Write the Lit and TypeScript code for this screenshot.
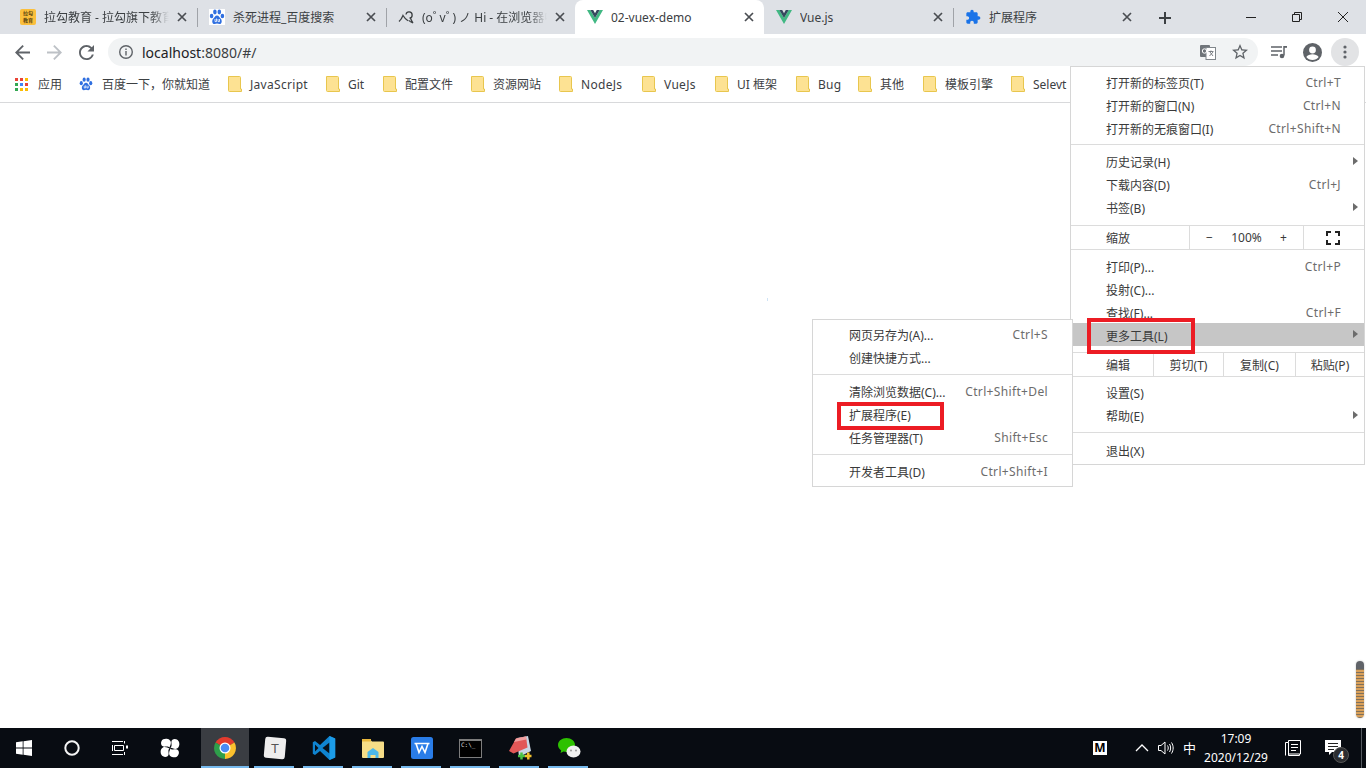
import { LitElement, html, css } from "lit";
import { customElement } from "lit/decorators.js";

const baidu = html`<svg class="fav" viewBox="0 0 16 16"><g fill="#2f6fe0"><ellipse cx="2.600" cy="7" rx="1.800" ry="2.300"/><ellipse cx="5.900" cy="3" rx="1.800" ry="2.400"/><ellipse cx="10.300" cy="3" rx="1.800" ry="2.400"/><ellipse cx="13.400" cy="7" rx="1.800" ry="2.300"/><path d="M8 6.500c-2 0-2.400 2-3.800 3.200C2.800 11 2.800 15 5.500 15c1 0 1.700-.4 2.500-.4s1.500.4 2.500.4c2.700 0 2.700-4 1.300-5.300C10.400 8.500 10 6.500 8 6.500z"/></g><path d="M6 10v2.600h1.500V9.500M9 10v2.600h1.500V10" fill="none" stroke="#fff" stroke-width=".8"/></svg>`;
const baiduTab = html`<span class="white">${baidu}</span>`;
const vue = html`<svg class="fav" viewBox="0 0 16 14"><path d="M0 0h3.300L8 8 12.700 0H16L8 14z" fill="#41b883"/><path d="M3.300 0h2.900L8 3.200 9.800 0h2.900L8 8z" fill="#35495e"/></svg>`;
const ext = html`<svg class="fav" viewBox="0 0 24 24"><path fill="#1a73e8" d="M20.500 11H19V7c0-1.100-.9-2-2-2h-4V3.500C13 2.120 11.880 1 10.500 1S8 2.120 8 3.500V5H4c-1.100 0-1.990.9-1.990 2v3.800H3.500c1.490 0 2.700 1.210 2.700 2.700s-1.210 2.700-2.700 2.700H2V20c0 1.100.9 2 2 2h3.800v-1.500c0-1.490 1.210-2.700 2.700-2.700 1.490 0 2.700 1.210 2.700 2.700V22H17c1.100 0 2-.9 2-2v-4h1.500c1.380 0 2.500-1.120 2.500-2.500S21.880 11 20.500 11z"/></svg>`;
const lagou = html`<span class="lagou">拉勾<br />教育</span>`;
const hi = html`<svg class="fav" viewBox="0 0 16 16"><path d="M1 12.500C2.800 11 4.200 8.500 5 6.500c1.200 2 3 4 5 5.300M8 5.500a3.100 3.100 0 1 1 3.500 3.600M12.300 8.500c.6 2 1.200 4 2.700 5.500-1.800-.6-3.200-1.500-4.300-2.600" fill="none" stroke="#3c4043" stroke-width="1.300"/></svg>`;
const folder = html`<svg class="folder" viewBox="0 0 14 16"><path d="M.5.5h11a1 1 0 0 1 1 1v11.500h1V15.500H1.500a1 1 0 0 1-1-1z" fill="#fde293" stroke="#e8c64e"/></svg>`;

const TABS = [
  { icon: lagou, title: "拉勾教育 - 拉勾旗下教育", fade: true },
  { icon: baiduTab, title: "杀死进程_百度搜索", fade: false },
  { icon: hi, title: "(o˚ v˚ ) ノ Hi - 在浏览器中", fade: true },
  { icon: vue, title: "02-vuex-demo", fade: false, active: true },
  { icon: vue, title: "Vue.js", fade: false },
  { icon: ext, title: "扩展程序", fade: false },
];

const MARKS = [
  { t: "百度一下，你就知道", w: 149, icon: baidu },
  { t: "JavaScript", w: 98, wide: true },
  { t: "Git", w: 57 },
  { t: "配置文件", w: 88 },
  { t: "资源网站", w: 88 },
  { t: "NodeJs", w: 83, wide: true },
  { t: "VueJs", w: 73, wide: true },
  { t: "UI 框架", w: 81 },
  { t: "Bug", w: 62, wide: true },
  { t: "其他", w: 65 },
  { t: "模板引擎", w: 88 },
  { t: "Selevt", w: 60 },
];

const TASK = [
  html`<svg viewBox="0 0 24 24" class="ti"><rect x="1.500" y="1.500" width="21" height="21" rx="2.500" fill="#eeeeee" transform="rotate(5 12 12)"/><text x="12" y="17" text-anchor="middle" font-size="13" font-family="Liberation Sans, sans-serif" fill="#555">T</text></svg>`,
  html`<svg viewBox="0 0 24 24" class="ti"><path d="M17.500 0 8 9 3 5 .8 6.200v11.600L3 19l5-4 9.500 9 5.700-2.400V2.400z" fill="#0f84d0"/><path d="M17.500 6.500 10.500 12l7 5.500z" fill="#081018"/><path d="M3 8.500v7l3.500-3.500z" fill="#081018"/><path d="M17.500 0l5.700 2.400v19.200L17.500 24z" fill="#1c9ce8"/></svg>`,
  html`<svg viewBox="0 0 24 24" class="ti"><path d="M1 4.500a1 1 0 0 1 1-1h7l2 2h11a1 1 0 0 1 1 1V21a1 1 0 0 1-1 1H2a1 1 0 0 1-1-1z" fill="#f6dd87"/><path d="M1 3h9v2.500H1z" fill="#e8b73c"/><path d="M6.500 22v-6L12 12l5.500 4v6h-3v-3h-5v3z" fill="#4db8e8"/></svg>`,
  html`<svg viewBox="0 0 24 24" class="ti"><rect x="1" y="1" width="22" height="22" rx="2.500" fill="#2a7de8"/><path d="M4.500 7.500h15M6 7.500l3 9 3-6 3 6 3-9" fill="none" stroke="#fff" stroke-width="1.600"/></svg>`,
  html`<span class="term"><span class="term-txt">C:\\_</span></span>`,
  html`<svg viewBox="0 0 24 24" class="ti"><path d="M9 2 20 0l3 15-12 6z" fill="#c8d6e4"/><path d="M8 2.500 18 .5l1.500 11-14 6L1 15z" fill="#e25757"/><path d="M8 2.500 18 .5l.4 3L6 6z" fill="#f0a0a0"/><path d="M10 20h7M13.500 16.500v7" stroke="#49c244" stroke-width="2.500"/><path d="M17 20h6.500M20.300 16.500v7" stroke="#f2c12e" stroke-width="2.500"/></svg>`,
  html`<svg viewBox="0 0 24 24" class="ti"><path d="M9.500 2C4.800 2 1 5.100 1 9c0 2.200 1.200 4.100 3.200 5.400L3.500 17l3-1.500c1 .3 2 .5 3 .5 4.700 0 8.500-3.100 8.500-7s-3.800-7-8.500-7z" fill="#2dc100"/><ellipse cx="16.500" cy="15.500" rx="7" ry="6" fill="#f0f0f0"/><circle cx="14" cy="14.500" r="1" fill="#999"/><circle cx="19" cy="14.500" r="1" fill="#999"/></svg>`,
];

@customElement("app-root")
export class AppRoot extends LitElement {
  static styles = css`
    :host { display: block; width: 1366px; height: 768px; position: relative; overflow: hidden; background: #fff; font: 12px "Noto Sans", "Noto Sans CJK SC", sans-serif; color: #3c4043; }
    .page { display: flex; flex-direction: column; height: 768px; }
    svg { display: block; flex: none; }

    .strip { height: 34px; background: #dee1e6; display: flex; padding-left: 8px; position: relative; flex: none; }
    .tab { width: 189px; height: 34px; display: flex; align-items: center; padding: 0 10px 0 12px; box-sizing: border-box; position: relative; flex: none; }
    .tab + .tab::before { content: ""; position: absolute; left: 0; top: 8px; height: 19px; width: 1px; background: #a0a3a8; }
    .tab.active { background: #fff; border-radius: 8px 8px 0 0; }
    .tab.active::before, .tab.active + .tab::before { display: none; }
    .tab-icon { width: 16px; height: 16px; display: flex; align-items: center; justify-content: center; flex: none; }
    .fav { width: 16px; height: 16px; }
    .white { background: #fff; width: 16px; height: 16px; display: block; }
    .lagou { width: 16px; height: 16px; border-radius: 2px; background: #fbbf3c; color: #5c4510; font-size: 5px; line-height: 7px; text-align: center; font-weight: 700; padding-top: 1px; box-sizing: border-box; overflow: hidden; }
    .title { flex: 1; min-width: 0; margin: 1px 0 0 8px; white-space: nowrap; overflow: hidden; font-size: 12px; line-height: 33px; }
    .title.fade { -webkit-mask-image: linear-gradient(90deg, #000 85%, transparent 100%); mask-image: linear-gradient(90deg, #000 85%, transparent 100%); }
    .close { width: 10px; height: 10px; margin-left: 8px; flex: none; }
    .plus { width: 14px; height: 14px; margin: 1px 0 0 16px; align-self: center; }
    .wins { position: absolute; right: 0; top: 0; display: flex; height: 34px; }
    .win { width: 46px; display: flex; align-items: center; justify-content: center; }

    .bar { height: 32px; display: flex; align-items: center; flex: none; padding: 0 0 0 15px; box-sizing: border-box; }
    .nav { width: 15px; height: 15px; margin: 4px 17px 0 0; }
    .omni { width: 1150px; height: 28px; margin: 4px 0 0 -3px; box-sizing: border-box; background: #f1f3f4; border-radius: 14px; display: flex; align-items: center; padding: 0 10px 0 10px; font-size: 14px; color: #3c4043; flex: none; }
    .url { flex: 1; margin-left: 8px; }
    .url-h { color: #202124; }
    .ic16 { width: 16px; height: 16px; }
    .star { margin-left: 16px; margin-right: 0; }
    .tools { display: flex; align-items: center; margin-top: 4px; }
    .media { margin-left: 13px; }
    .avatar { margin-left: 16px; width: 19px; height: 19px; }
    .more { margin-left: 9px; width: 28px; height: 28px; border-radius: 50%; background: #e2e3e5; display: flex; align-items: center; justify-content: center; }

    .marks { height: 37px; flex: none; border-bottom: 1px solid #d8d9db; box-sizing: border-box; display: flex; align-items: center; padding-left: 15px; }
    .apps { width: 13px; height: 13px; }
    .apps-t { width: 41px; margin-left: 10px; }
    .mark { display: flex; align-items: center; white-space: nowrap; flex: none; box-sizing: border-box; }
    .mark .fav { width: 14px; height: 16px; }
    .folder { width: 14px; height: 16px; }
    .mark span { margin-left: 9px; }
    .mark.f span { margin-left: 8px; }
    .mark.wide span { letter-spacing: .3px; }

    .main { flex: 1; background: #fff; }
    .speck { position: absolute; left: 767px; top: 298px; width: 1px; height: 3px; background: #cfe3f5; }

    .task { height: 40px; flex: none; background: #080c12; display: flex; position: relative; color: #fff; }
    .sys { width: 48px; display: flex; align-items: center; justify-content: center; flex: none; }
    .sys.pin { margin-left: 2px; margin-right: 7px; }
    .app { width: 49px; height: 40px; flex: none; display: flex; align-items: center; justify-content: center; position: relative; }
    .app::after { content: ""; position: absolute; left: 4px; width: 40px; bottom: 0; height: 2px; background: #76b9ed; }
    .app.on { background: #3a3d42; width: 48px; margin-right: 1px; }
    .app.on::after { left: 0; width: 48px; }
    .ti { width: 24px; height: 24px; }
    .term { width: 23px; height: 19px; box-sizing: border-box; background: #000; border: 1px solid #7d7d7d; border-top-width: 2px; color: #ddd; font-size: 6px; line-height: 8px; padding-left: 1px; font-family: "DejaVu Sans Mono", monospace; }
    .tray { margin-left: auto; display: flex; align-items: center; height: 40px; }
    .m { width: 14px; height: 14px; background: #fff; color: #000; font-weight: 700; font-size: 12px; line-height: 14px; text-align: center; margin-right: 28px; }
    .spk { margin-left: 9px; }
    .ime { font-size: 13px; margin: 0 0 0 8px; color: #fff; width: 13px; line-height: 18px; }
    .clock { width: 80px; text-align: center; line-height: 19px; color: #fff; font-size: 12px; margin-right: 9px; }
    .msg { position: relative; margin: 0 25px 0 24px; }
    .badge { position: absolute; left: 8px; top: 7px; width: 16px; height: 16px; border-radius: 50%; background: #2b2d30; border: 1px solid #555; box-sizing: border-box; color: #fff; font-size: 10px; font-weight: 700; line-height: 14px; text-align: center; }
    .desk { width: 1px; height: 40px; background: #555a60; position: absolute; right: 4px; top: 0; }

    .thumb { position: absolute; left: 1356px; top: 661px; width: 8px; height: 57px; border-radius: 4px; box-shadow: 0 0 2px #bbb; background: linear-gradient(#606368 0 8px, transparent 8px), repeating-linear-gradient(#d9a05a 0 2px, #80705a 2px 3px); }

    .menu { position: absolute; background: #fff; border: 1px solid #d6d6d6; box-sizing: border-box; color: #3a3a3a; }
    .main-menu { left: 1070px; top: 66px; width: 295px; height: 399px; padding-top: 4px; }
    .sub-menu { left: 812px; top: 319px; width: 261px; height: 168px; padding-top: 3px; }
    .row { height: 23px; display: flex; align-items: center; padding: 0 23px 0 35px; position: relative; white-space: nowrap; box-sizing: border-box; }
    .sub-menu .row { padding: 0 24px 0 36px; }
    .row .sc { margin-left: auto; color: #6c6c6c; letter-spacing: .35px; }
    .row.hl { background: #c6c6c6; margin-top: -1px; padding-top: 2px; }
    .arrow { position: absolute; right: 6px; top: 7px; width: 0; height: 0; border-left: 5px solid #6c6c6c; border-top: 4px solid transparent; border-bottom: 4px solid transparent; }
    .sep { height: 1px; background: #dcdcdc; margin: 4px 0 5px; }
    .s2 { margin: 6px 0 0; }
    .s3 { margin: 0 0 5px; }
    .s4 { margin: 6px 0 0; }
    .s5 { margin: 0 0 4px; }
    .s6 { margin: 5px 0 6px; }
    .s7 { margin: 5px 0; }
    .zoom, .edit { height: 23px; display: flex; align-items: center; }
    .zoom .lab, .edit .lab { width: 82px; padding-left: 35px; box-sizing: border-box; flex: none; }
    .zoom .lab { width: 118px; }
    .cell { display: flex; align-items: center; justify-content: center; height: 23px; border-left: 1px solid #dcdcdc; box-sizing: border-box; flex: none; }
    .c-zoom { width: 114px; justify-content: space-between; padding: 0 16px 0 16px; }
    .c-full { flex: 1; padding-right: 2px; }
    .c-e1 { width: 70px; } .c-e2 { width: 72px; } .c-e3 { flex: 1; }

    .red { position: absolute; border: 4px solid #ec1c24; box-sizing: border-box; }
    .r1 { left: 1087px; top: 318px; width: 108px; height: 36px; }
    .r2 { left: 837px; top: 402px; width: 107px; height: 28px; }
  `;

  private row(t: string, sc = "", arrow = false, hl = false) {
    return html`<div class="row ${hl ? "hl" : ""}"><span>${t}</span>${sc ? html`<span class="sc">${sc}</span>` : ""}${arrow ? html`<i class="arrow"></i>` : ""}</div>`;
  }

  render() {
    return html`
      <div class="page">
        <div class="strip">
          ${TABS.map((t) => html`<div class="tab ${t.active ? "active" : ""}">
            <span class="tab-icon">${t.icon}</span>
            <span class="title ${t.fade ? "fade" : ""}">${t.title}</span>
            <svg class="close" viewBox="0 0 10 10"><path d="M1 1l8 8M9 1l-8 8" stroke="#4a4d52" stroke-width="1.700"/></svg>
          </div>`)}
          <svg class="plus" viewBox="0 0 14 14"><path d="M7 1v12M1 7h12" stroke="#3c4043" stroke-width="2"/></svg>
          <div class="wins">
            <div class="win"><svg width="10" height="10" viewBox="0 0 10 10"><path d="M0 5.500h10" stroke="#222"/></svg></div>
            <div class="win"><svg width="10" height="10" viewBox="0 0 10 10"><path d="M2.500 2.500V.5h7v7h-2M.5 2.500h7v7h-7z" fill="none" stroke="#222"/></svg></div>
            <div class="win"><svg width="10" height="10" viewBox="0 0 10 10"><path d="M0 0l10 10M10 0L0 10" stroke="#222"/></svg></div>
          </div>
        </div>

        <div class="bar">
          <svg class="nav" viewBox="4 4 16 16"><path fill="#5f6368" d="M20 11H7.830l5.590-5.590L12 4l-8 8 8 8 1.410-1.410L7.830 13H20v-2z"/></svg>
          <svg class="nav" viewBox="4 4 16 16"><path fill="#bdc1c6" d="M12 4l-1.410 1.410L16.170 11H4v2h12.170l-5.580 5.590L12 20l8-8z"/></svg>
          <svg class="nav" viewBox="4 4 16 16"><path fill="#5f6368" d="M17.650 6.350A7.960 7.960 0 0 0 12 4c-4.420 0-7.990 3.580-7.990 8s3.570 8 7.990 8c3.730 0 6.840-2.550 7.730-6h-2.080A5.990 5.990 0 0 1 12 18c-3.310 0-6-2.690-6-6s2.690-6 6-6c1.660 0 3.140.69 4.220 1.780L13 11h7V4l-2.350 2.350z"/></svg>
          <div class="omni">
            <svg class="ic16" viewBox="0 0 16 16"><circle cx="8" cy="8" r="6.300" fill="none" stroke="#5f6368" stroke-width="1.400"/><path d="M7.300 7h1.400v4.500H7.300zM7.300 4.500h1.400v1.400H7.300z" fill="#5f6368"/></svg>
            <span class="url"><span class="url-h">localhost</span>:8080/#/</span>
            <svg class="ic16" viewBox="0 0 16 16"><rect x="0" y="1" width="10" height="12" rx="1" fill="#70757a"/><rect x="6" y="3.500" width="9.500" height="12" fill="#fff" stroke="#80868b"/><circle cx="4.500" cy="7" r="2.200" fill="none" stroke="#fff"/><path d="M8.500 7.500h5M11 6.500v1M9.500 12l3.500-4M10 8l3 4" stroke="#70757a" stroke-width=".9" fill="none"/></svg>
            <svg class="ic16 star" viewBox="2 2 20 20"><path fill="#5f6368" d="M22 9.240l-7.190-.62L12 2 9.190 8.630 2 9.240l5.460 4.730L5.820 21 12 17.270 18.180 21l-1.630-7.030L22 9.240zM12 15.400l-3.760 2.270 1-4.280-3.320-2.880 4.380-.38L12 6.100l1.710 4.040 4.380.38-3.320 2.880 1 4.280L12 15.400z"/></svg>
          </div>
          <div class="tools">
            <svg class="ic16 media" viewBox="0 0 16 16"><path d="M0 3h11M0 7h11M0 11h7" stroke="#5f6368" stroke-width="1.500"/><path d="M13 2v9.500" stroke="#5f6368" stroke-width="1.500"/><circle cx="11" cy="12" r="2.300" fill="#5f6368"/><path d="M13 2h3v1.800h-3z" fill="#5f6368"/></svg>
            <svg class="avatar" viewBox="0 0 19 19"><circle cx="9.500" cy="9.500" r="9.500" fill="#5f6368"/><circle cx="9.500" cy="7" r="3.400" fill="#fff"/><path d="M3.300 14c1.200-2 3.800-2.800 6.200-2.800s5 .8 6.200 2.800c-1.400 1.900-3.700 3-6.200 3s-4.800-1.100-6.200-3z" fill="#fff"/></svg>
            <div class="more"><svg width="4" height="14" viewBox="0 0 4 14"><g fill="#5f6368"><circle cx="2" cy="2" r="1.600"/><circle cx="2" cy="7" r="1.600"/><circle cx="2" cy="12" r="1.600"/></g></svg></div>
          </div>
        </div>

        <div class="marks">
          <svg class="apps" viewBox="0 0 13 13">
            <rect width="3" height="3" fill="#ea4335"/><rect x="5" width="3" height="3" fill="#ea4335"/><rect x="10" width="3" height="3" fill="#fbbc04"/>
            <rect y="5" width="3" height="3" fill="#34a853"/><rect x="5" y="5" width="3" height="3" fill="#4285f4"/><rect x="10" y="5" width="3" height="3" fill="#ea4335"/>
            <rect y="10" width="3" height="3" fill="#34a853"/><rect x="5" y="10" width="3" height="3" fill="#fbbc04"/><rect x="10" y="10" width="3" height="3" fill="#fbbc04"/>
          </svg>
          <span class="apps-t">应用</span>
          ${MARKS.map((m) => html`<div class="mark ${m.icon ? "" : "f"} ${m.wide ? "wide" : ""}" style="width:${m.w}px">${m.icon ?? folder}<span>${m.t}</span></div>`)}
        </div>

        <div class="main"></div>

        <div class="task">
          <div class="sys"><svg width="16" height="16" viewBox="0 0 16 16"><path d="M0 2.300 6.700 1.300V7.500H0zM7.500 1.200 16 0V7.500H7.500zM0 8.400H6.700V14.700L0 13.700zM7.500 8.400H16V16L7.500 14.800z" fill="#fff"/></svg></div>
          <div class="sys"><svg width="16" height="16" viewBox="0 0 16 16"><circle cx="8" cy="8" r="6.700" fill="none" stroke="#f4f4f4" stroke-width="2"/></svg></div>
          <div class="sys"><svg width="16" height="16" viewBox="0 0 16 16"><path d="M0 1.500h11M2.500 5.500h9v5h-9zM0 14.500h11M.5 5v6M12.500 1v2.500M12.500 12v3" fill="none" stroke="#fff"/><rect x="14" y="5.500" width="2" height="3" fill="#fff"/></svg></div>
          <div class="sys pin"><svg width="20" height="22" viewBox="0 0 22 22"><g fill="#fff"><path d="M10.500 10.500C9 8.500 6.500 9.500 4.500 9.500 .5 9.500 0 3.500 3.500 1.500 7-.5 12 1.500 12 5c0 2.500-1 3.500-1.500 5.500z"/><path d="M11.500 10.500C13.500 9 12.500 6.500 12.500 4.500c0-4 6-4.500 8-1 2 3.500 0 8.500-3.500 8.500-2.500 0-3.500-1-5.500-1.500z"/><path d="M11.500 11.500C13 13.500 15.500 12.500 17.500 12.500c4 0 4.500 6 1 8-3.500 2-8.500 0-8.500-3.500 0-2.500 1-3.500 1.500-5.500z"/><path d="M10.500 11.500C8.500 13 9.500 15.500 9.500 17.500c0 4-6 4.500-8 1-2-3.500 0-8.500 3.500-8.500 2.500 0 3.500 1 5.500 1.500z"/></g></svg></div>
          <div class="app on"><svg width="24" height="24" viewBox="0 0 24 24"><path d="M12 12 2.500 6.500A11 11 0 0 1 21.500 6.500z" fill="#e33b2e"/><path d="M12 12 21.500 6.500A11 11 0 0 1 12 23z" fill="#fbc02d"/><path d="M12 12 12 23A11 11 0 0 1 2.500 6.500z" fill="#2e9e4a"/><circle cx="12" cy="12" r="5.500" fill="#fff"/><circle cx="12" cy="12" r="4.300" fill="#4b8bf5"/></svg></div>
          ${TASK.map((i) => html`<div class="app">${i}</div>`)}
          <div class="tray">
            <span class="m">M</span>
            <svg width="14" height="10" viewBox="0 0 14 10"><path d="M1 8 7 2l6 6" fill="none" stroke="#fff" stroke-width="1.300"/></svg>
            <svg class="spk" width="17" height="14" viewBox="0 0 17 14"><path d="M.5 4.500h2.500L7 1v12L3 9.500H.5zM9.500 4.500c1 1.500 1 3.500 0 5M11.500 3c1.500 2.500 1.500 5.500 0 8M13.500 1.500c2.200 3.500 2.200 7.500 0 11" fill="none" stroke="#fff"/></svg>
            <span class="ime">中</span>
            <div class="clock">17:09<br />2020/12/29</div>
            <svg width="16" height="16" viewBox="0 0 16 16"><path d="M3.500 2.500V.5h12v13.500h-12M.5 2.500h3v13h11v-1.500M.5 2.500v13M6 4.500h7M6 7.500h7M6 10.500h5" fill="none" stroke="#fff"/></svg>
            <div class="msg">
              <svg width="16" height="16" viewBox="0 0 16 16"><path d="M0 0h16v12H7l-3 3v-3H0z" fill="#fff"/><path d="M3 3.500h10M3 6.500h10M3 9.500h6" stroke="#222"/></svg>
              <span class="badge">4</span>
            </div>
          </div>
          <div class="desk"></div>
        </div>
      </div>

      <div class="speck"></div>
      <div class="thumb"></div>

      <div class="menu main-menu">
        ${this.row("打开新的标签页(T)", "Ctrl+T")}
        ${this.row("打开新的窗口(N)", "Ctrl+N")}
        ${this.row("打开新的无痕窗口(I)", "Ctrl+Shift+N")}
        <div class="sep"></div>
        ${this.row("历史记录(H)", "", true)}
        ${this.row("下载内容(D)", "Ctrl+J")}
        ${this.row("书签(B)", "", true)}
        <div class="sep s2"></div>
        <div class="zoom">
          <span class="lab">缩放</span>
          <div class="cell c-zoom"><span>−</span><span>100%</span><span>+</span></div>
          <div class="cell c-full"><svg width="14" height="14" viewBox="0 0 14 14"><path d="M1 5V1h4M9 1h4v4M13 9v4H9M5 13H1V9" fill="none" stroke="#222" stroke-width="2"/></svg></div>
        </div>
        <div class="sep s3"></div>
        ${this.row("打印(P)...", "Ctrl+P")}
        ${this.row("投射(C)...")}
        ${this.row("查找(F)...", "Ctrl+F")}
        ${this.row("更多工具(L)", "", true, true)}
        <div class="sep s4"></div>
        <div class="edit">
          <span class="lab">编辑</span>
          <div class="cell c-e1">剪切(T)</div>
          <div class="cell c-e2">复制(C)</div>
          <div class="cell c-e3">粘贴(P)</div>
        </div>
        <div class="sep s5"></div>
        ${this.row("设置(S)")}
        ${this.row("帮助(E)", "", true)}
        <div class="sep s6"></div>
        ${this.row("退出(X)")}
      </div>

      <div class="menu sub-menu">
        ${this.row("网页另存为(A)...", "Ctrl+S")}
        ${this.row("创建快捷方式...")}
        <div class="sep s7"></div>
        ${this.row("清除浏览数据(C)...", "Ctrl+Shift+Del")}
        ${this.row("扩展程序(E)")}
        ${this.row("任务管理器(T)", "Shift+Esc")}
        <div class="sep s7"></div>
        ${this.row("开发者工具(D)", "Ctrl+Shift+I")}
      </div>

      <div class="red r1"></div>
      <div class="red r2"></div>
    `;
  }
}
